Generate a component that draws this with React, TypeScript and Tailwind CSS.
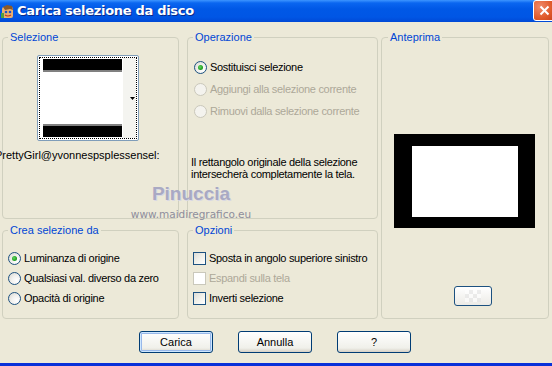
import React from "react";

function Radio({ checked, disabled }: { checked?: boolean; disabled?: boolean }) {
  return (
    <span
      className={
        "relative inline-flex h-[13px] w-[13px] shrink-0 items-center justify-center rounded-full border " +
        (disabled
          ? "border-[#CAC8BB] bg-[#F4F3EE]"
          : "border-[#1C5180] bg-[radial-gradient(circle_at_70%_70%,#ffffff_0%,#f1f1ef_45%,#d6d5cd_100%)]")
      }
    >
      {checked && (
        <span className="h-[5px] w-[5px] rounded-full bg-[radial-gradient(circle_at_40%_40%,#63d463_0%,#21a121_60%,#1c8a1c_100%)]" />
      )}
    </span>
  );
}

function Check({ disabled }: { disabled?: boolean }) {
  return (
    <span
      className={
        "inline-block h-[13px] w-[13px] shrink-0 border " +
        (disabled
          ? "border-[#CAC8BB] bg-white"
          : "border-[#1C5180] bg-[linear-gradient(135deg,#dcdcd7_0%,#f0f0ea_50%,#ffffff_100%)]")
      }
    />
  );
}

function Group({
  title,
  className,
  legendLeft,
  children,
}: {
  title: string;
  className?: string;
  legendLeft?: string;
  children?: React.ReactNode;
}) {
  return (
    <div className={"relative rounded-[4px] border border-[#D0D0BF] " + (className || "")}>
      <span
        className={
          "absolute top-[-7px] bg-[#ECE9D8] px-[2px] leading-[13px] text-[#0046D5] " + (legendLeft || "left-[5px]")
        }
      >
        {title}
      </span>
      {children}
    </div>
  );
}

function Btn({ label, def }: { label: string; def?: boolean }) {
  return (
    <button
      className={
        "flex h-[22px] w-[74px] items-center justify-center rounded-[3px] border border-[#003C74] text-black " +
        (def
          ? "bg-[linear-gradient(#ffffff,#f0f0ea_80%,#d6d0c5)] shadow-[inset_0_0_0_1px_#cee7ff,inset_0_0_0_2px_#98b8ea]"
          : "bg-[linear-gradient(#ffffff,#f0f0ea_80%,#d6d0c5)]")
      }
    >
      {label}
    </button>
  );
}

export default function App() {
  return (
    <div className="relative flex h-[366px] w-[552px] flex-col overflow-hidden bg-[#ECE9D8] font-['Liberation_Sans',Arial,sans-serif] text-[11px] text-black">
      {/* Title bar */}
      <div className="flex h-[22px] shrink-0 items-center bg-[linear-gradient(#3d95ff_0px,#0a66f0_3px,#0058e6_9px,#0056e5_17px,#0049d6_22px)]">
        <svg width="14" height="16" viewBox="0 0 14 16" className="ml-[1px] mt-[1px]">
          <rect x="1" y="3" width="11" height="11" rx="2" fill="#e8b070" />
          <path d="M2 3 L6 1 L11 2 L12 6 L9 5 L4 6 Z" fill="#8a5a2a" />
          <circle cx="5" cy="8" r="1.3" fill="#2050c0" />
          <circle cx="9" cy="8" r="1.3" fill="#2050c0" />
          <path d="M4 11 Q7 13 10 11" stroke="#c03020" strokeWidth="1.2" fill="none" />
          <rect x="0" y="9" width="3" height="5" fill="#50a040" />
        </svg>
        <span className="ml-[2px] font-['DejaVu_Sans',sans-serif] text-[13px] font-bold tracking-[-0.3px] text-white [text-shadow:1px_1px_0_#0a2a8a]">
          Carica selezione da disco
        </span>
        <div className="ml-auto mr-[-3px] mt-[-1px] flex h-[21px] w-[22px] items-center justify-center rounded-[3px] border border-white bg-[radial-gradient(circle_at_30%_30%,#f08a6a,#e05a2a_60%,#c8401c)]">
          <svg width="11" height="11" viewBox="0 0 11 11">
            <path d="M1.5 1.5 L9.5 9.5 M9.5 1.5 L1.5 9.5" stroke="white" strokeWidth="2" />
          </svg>
        </div>
      </div>

      {/* Body */}
      <div className="flex flex-1 flex-col pl-[2px] pt-[15px]">
        <div className="grid grid-cols-[177px_191px_168px] grid-rows-[182px_89px] gap-y-[11px]">
          {/* Selezione */}
          <Group title="Selezione" className="col-start-1 row-start-1" legendLeft="left-[5px]">
            <div className="ml-[34px] mt-[17px] flex h-[86px] w-[102px] rounded-[2px] border border-[#7F9DB9] bg-white p-[1px]">
              <div className="flex flex-1 border border-dotted border-black">
                <div className="flex w-[80px] flex-col justify-between py-[1px] pl-[3px]">
                  <div className="h-[13px] w-[79px] border-b-[2px] border-[#808080] bg-black" />
                  <div className="h-[13px] w-[79px] border-t-[2px] border-[#808080] bg-black" />
                </div>
                <div className="relative ml-auto w-[13px] bg-[#F4F4F0]">
                  <svg width="5" height="3" viewBox="0 0 5 3" className="absolute left-[7px] top-[39px]">
                    <path d="M0 0 H5 L2.5 3 Z" fill="black" />
                  </svg>
                </div>
              </div>
            </div>
            <div className="ml-[-8px] mt-[8px] whitespace-nowrap leading-[13px]">
              PrettyGirl@yvonnespsplessensel:
            </div>
          </Group>

          {/* Operazione */}
          <Group title="Operazione" className="col-start-2 row-start-1 ml-[8px] w-[191px]" legendLeft="left-[5px]">
            <div className="ml-[6px] mt-[23px] flex flex-col gap-[9px] tracking-[-0.3px]">
              <div className="flex h-[13px] items-center gap-[3px]">
                <Radio checked />
                <span>Sostituisci selezione</span>
              </div>
              <div className="flex h-[13px] items-center gap-[3px] text-[#ACA899]">
                <Radio disabled />
                <span>Aggiungi alla selezione corrente</span>
              </div>
              <div className="flex h-[13px] items-center gap-[3px] text-[#ACA899]">
                <Radio disabled />
                <span>Rimuovi dalla selezione corrente</span>
              </div>
            </div>
            <div className="ml-[3px] mt-[38px] leading-[12px] tracking-[-0.3px]">
              Il rettangolo originale della selezione
              <br />
              intersecherà completamente la tela.
            </div>
          </Group>

          {/* Anteprima */}
          <Group title="Anteprima" className="col-start-3 row-span-2 row-start-1 ml-[11px] w-[168px]" legendLeft="left-[6px]">
            <div className="ml-[12px] mt-[96px] flex h-[94px] w-[141px] bg-black pl-[18px] pt-[12px]">
              <div className="h-[71px] w-[106px] bg-white" />
            </div>
            <div className="ml-[72px] mt-[58px] flex h-[20px] w-[38px] items-center justify-center rounded-[3px] border border-[#1C5180] bg-[linear-gradient(#ffffff,#ecebe6)]">
              <div className="grid h-[12px] w-[16px] grid-cols-4 grid-rows-3 opacity-60">
                <span className="bg-white" />
                <span className="bg-[#e4e4e4]" />
                <span className="bg-white" />
                <span className="bg-[#e4e4e4]" />
                <span className="bg-[#e4e4e4]" />
                <span className="bg-white" />
                <span className="bg-[#e4e4e4]" />
                <span className="bg-white" />
                <span className="bg-white" />
                <span className="bg-[#e4e4e4]" />
                <span className="bg-white" />
                <span className="bg-[#e4e4e4]" />
              </div>
            </div>
          </Group>

          {/* Crea selezione da */}
          <Group title="Crea selezione da" className="col-start-1 row-start-2" legendLeft="left-[5px]">
            <div className="ml-[5px] mt-[21px] flex flex-col gap-[7px] tracking-[-0.3px]">
              <div className="flex h-[13px] items-center gap-[3px]">
                <Radio checked />
                <span>Luminanza di origine</span>
              </div>
              <div className="flex h-[13px] items-center gap-[3px]">
                <Radio />
                <span>Qualsiasi val. diverso da zero</span>
              </div>
              <div className="flex h-[13px] items-center gap-[3px]">
                <Radio />
                <span>Opacità di origine</span>
              </div>
            </div>
          </Group>

          {/* Opzioni */}
          <Group title="Opzioni" className="col-start-2 row-start-2 ml-[8px] w-[191px]" legendLeft="left-[5px]">
            <div className="ml-[5px] mt-[21px] flex flex-col gap-[7px] tracking-[-0.3px]">
              <div className="flex h-[13px] items-center gap-[3px]">
                <Check />
                <span>Sposta in angolo superiore sinistro</span>
              </div>
              <div className="flex h-[13px] items-center gap-[3px] text-[#ACA899]">
                <Check disabled />
                <span>Espandi sulla tela</span>
              </div>
              <div className="flex h-[13px] items-center gap-[3px]">
                <Check />
                <span>Inverti selezione</span>
              </div>
            </div>
          </Group>
        </div>

        {/* Buttons */}
        <div className="ml-[137px] mt-[12px] flex gap-[25px]">
          <Btn label="Carica" def />
          <Btn label="Annulla" />
          <Btn label="?" />
        </div>
      </div>

      {/* bottom frame line */}
      <div className="h-[3px] shrink-0 bg-[#0831D9]" />

      {/* Watermark overlay */}
      <div className="pointer-events-none absolute left-[130px] top-[183px] flex w-[122px] flex-col items-center">
        <span className="font-['Liberation_Sans',sans-serif] text-[19px] font-bold leading-[22px] text-[#A9A9C3] [text-shadow:1px_1px_0_#d8d8e4]">
          Pinuccia
        </span>
        <span className="mt-[3px] font-['DejaVu_Sans',sans-serif] text-[10.5px] leading-[12px] text-[#8E8E9C]">
          www.maidiregrafico.eu
        </span>
      </div>
    </div>
  );
}
